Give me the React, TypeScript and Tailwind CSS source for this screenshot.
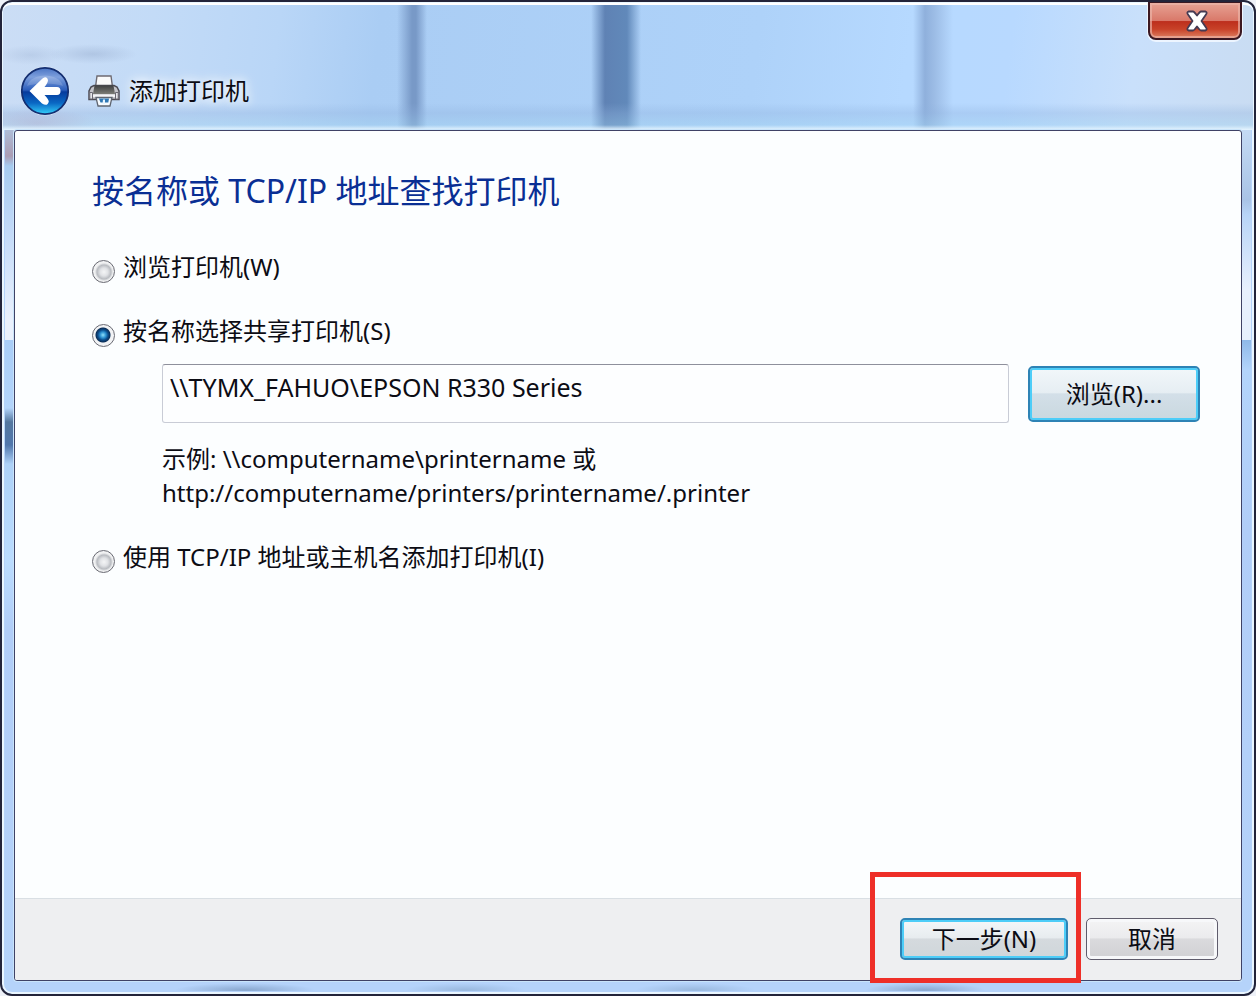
import { useState } from "react";
import type { ReactNode } from "react";

type Method = "browse" | "shared" | "tcpip";

function BackIcon() {
  return (
    <svg viewBox="0 0 50 50" className="size-[50px]" aria-hidden="true">
      <defs>
        <linearGradient id="orb" x1="0" y1="0" x2="0" y2="1">
          <stop offset="0" stopColor="#4a74c4" />
          <stop offset="0.2" stopColor="#7d9fdc" />
          <stop offset="0.48" stopColor="#2b5dbb" />
          <stop offset="0.52" stopColor="#063a9c" />
          <stop offset="0.76" stopColor="#0a68c4" />
          <stop offset="1" stopColor="#35d0fa" />
        </linearGradient>
      </defs>
      <circle cx="25" cy="25" r="24.5" fill="#f2f8ff" opacity="0.6" />
      <circle cx="25" cy="25" r="23.2" fill="url(#orb)" stroke="#142f72" strokeWidth="1.8" />
      <path d="M7 20C11 6 39 6 43 20C36 17 14 17 7 20Z" fill="#fff" opacity="0.16" />
      <path
        d="M9.500 25L22.500 12.500Q27 9.500 28 14Q28 17 24.500 21H37Q40.500 21 40.500 25Q40.500 29 37 29H24.500Q28.500 33 28.800 35.500Q27.500 41 22 37.500Z"
        fill="#fff"
      />
    </svg>
  );
}

function PrinterIcon() {
  return (
    <svg viewBox="0 0 32 32" className="size-8" aria-hidden="true">
      <defs>
        <linearGradient id="printerTop" x1="0" y1="0" x2="0" y2="1">
          <stop offset="0" stopColor="#3f4041" />
          <stop offset="1" stopColor="#7b7c76" />
        </linearGradient>
      </defs>
      <path d="M9 1H23L24.500 12H7.500Z" fill="#fafafa" stroke="#6d6a72" strokeWidth="1.400" />
      <path d="M3 12L6 10.500H26L29 12L31 16V24.500H1V16Z" fill="#c4c4c9" stroke="#4c4b54" strokeWidth="1.500" />
      <path d="M6.500 10.500H25.500L27 19H5Z" fill="url(#printerTop)" />
      <path d="M5 19.500H27V22H5Z" fill="#f4f4f6" />
      <path d="M1.800 17.500H4.500V24H1.800ZM27.500 17.500H30.200V24H27.500Z" fill="#e6e6ea" stroke="#6a6871" />
      <path d="M8 22.500H24L22 31H10Z" fill="#f6fbff" stroke="#5f6570" strokeWidth="1.300" />
      <path d="M11 23.500H21L20.300 27.500H12.500Z" fill="#2f78b5" />
      <path d="M15 24.500H17V29H14.500Z" fill="#e7f5ff" />
    </svg>
  );
}

function CloseIcon() {
  return (
    <svg viewBox="0 0 24 22" className="h-[22px] w-6" aria-hidden="true">
      <path
        d="M3.500 1.500H8Q9 1.500 12 5.500Q15 1.500 16 1.500H20.500Q22.500 2.500 21 4.500L16.500 11L21 17.500Q22.500 19.500 20.500 20.500H16Q15 20.500 12 16.500Q9 20.500 8 20.500H3.500Q1.500 19.500 3 17.500L7.500 11L3 4.500Q1.500 2.500 3.500 1.500Z"
        fill="#fff"
        stroke="#453a52"
        strokeWidth="1.800"
        strokeLinejoin="round"
      />
    </svg>
  );
}

function RadioOption({
  value,
  current,
  onSelect,
  children,
}: {
  value: Method;
  current: Method;
  onSelect: (value: Method) => void;
  children: ReactNode;
}) {
  return (
    <label className="flex w-fit items-start gap-2 text-2xl leading-8">
      <input
        type="radio"
        name="method"
        value={value}
        checked={current === value}
        onChange={() => onSelect(value)}
        className="mt-[9px] size-[23px] shrink-0 appearance-none rounded-full border border-[#696a73] bg-[radial-gradient(circle_at_12px_12px,#f4f5f6_0,#e0e2e5_4px,#b9bcc1_7px,#f0f1f2_9px)] bg-origin-border checked:bg-[radial-gradient(circle_at_11px_11px,#8fe0fa_0,#2b8fcf_3px,#0d4f8e_5px,#0b2f58_7px,#f2f3f5_8px)]"
      />
      <span>{children}</span>
    </label>
  );
}

export default function App() {
  const [method, setMethod] = useState<Method>("shared");
  const [printer, setPrinter] = useState("\\\\TYMX_FAHUO\\EPSON R330 Series");

  return (
    <div className="flex min-h-screen flex-col bg-[#eef1f8] font-['Noto_Sans','Noto_Sans_CJK_SC',sans-serif] text-[#0c0c14]">
      <main className="flex flex-1 flex-col overflow-hidden rounded-xl border-2 border-[#23243a] bg-[#b5d3fa] shadow-[inset_0_0_0_2px_#eaf6ff]">
        <header className="m-px mb-0 flex h-[127px] items-start rounded-t-lg border-t-2 border-white bg-[linear-gradient(180deg,transparent_98px,#8fb2de55_108px,#9fd0ee66_120px,#e6f5ff_125px),radial-gradient(ellipse_44px_10px_at_90px_49px,#8fa5c866,transparent),radial-gradient(ellipse_34px_10px_at_28px_50px,#8fa5c844,transparent),radial-gradient(ellipse_60px_14px_at_34px_118px,#c09bb877,transparent),linear-gradient(90deg,transparent_394px,#7899c7_409px,#7899c7_413px,transparent_424px,transparent_588px,#5f82b4_602px,#6189ba_624px,transparent_638px,transparent_910px,#8fb0dc_922px,#9dbde6_932px,transparent_950px),linear-gradient(97deg,#cbddf5_0,#c3dbf7_12%,#b9d6f7_22%,#aacdf4_30%,#aed2f9_60%,#b6d9ff_72%,#b8d9ff_80%,#c9e0fb_90%,#c9dcf2_100%)]">
          <div className="flex items-center pt-[61px] pl-[17px]">
            <button type="button" aria-label="后退" className="rounded-full">
              <BackIcon />
            </button>
            <div className="flex items-center gap-[9px] pl-[18px]">
              <PrinterIcon />
              <h1 className="text-2xl leading-8 [text-shadow:0_0_8px_white,0_0_14px_white]">添加打印机</h1>
            </div>
          </div>
          <button
            type="button"
            aria-label="关闭"
            className="-mt-1 mr-[11px] ml-auto flex h-[39px] w-[94px] items-center justify-center rounded-b-lg border-2 border-[#3b1822] bg-[linear-gradient(180deg,#e7a294_0,#d9796a_50%,#bd2f1d_53%,#c84229_75%,#dd8062_100%)] pl-1 shadow-[inset_0_0_0_2px_#ecb5a9aa,0_1px_0_1px_#edf5ff]"
          >
            <CloseIcon />
          </button>
        </header>

        <div className="flex flex-1">
          <div className="ml-[3px] w-[9px] bg-[linear-gradient(180deg,#aebdd8_0,#ab9db4_26px,#a6cbf0_36px,#c2d9f8_100px,#eaf1fd_190px,#eaf1fd_210px,#a9cdf7_210px,#b3d4fb_278px,#54779f_292px,#5177ac_315px,#add1f8_334px,#bbdcff_430px,#b1cdf8_500px,#b5d3fa_100%)]" />
          <section className="flex flex-1 flex-col rounded-[3px] border border-[#3f4266] bg-[#fcfeff] shadow-[0_0_0_1px_#c9e4fa]">
            <form id="printer-form" className="flex flex-1 flex-col pt-9 pr-[41px] pl-[77px]" onSubmit={(e) => e.preventDefault()}>
              <h2 className="text-[32px] leading-12 text-[#0a2f94]">按名称或 TCP/IP 地址查找打印机</h2>

              <div className="mt-9">
                <RadioOption value="browse" current={method} onSelect={setMethod}>
                  浏览打印机(W)
                </RadioOption>
              </div>

              <div className="mt-8">
                <RadioOption value="shared" current={method} onSelect={setMethod}>
                  按名称选择共享打印机(S)
                </RadioOption>
                <div className="mt-[17px] flex items-center gap-[19px] pl-[70px]">
                  <input
                    type="text"
                    aria-label="打印机名称"
                    value={printer}
                    onChange={(e) => setPrinter(e.target.value)}
                    className="h-[59px] min-w-0 flex-1 rounded-[3px] border border-[#c9ccd6] border-t-[#8e909c] bg-[#fdfeff] px-[7px] pb-3.5 text-[25px] outline-none"
                  />
                  <button
                    type="button"
                    className="h-14 w-[172px] rounded-[5px] border-2 border-[#2e83b5] bg-[linear-gradient(180deg,#f2f7fa_0,#e6eef3_47%,#d3dfe8_50%,#c9d8df_100%)] text-2xl shadow-[inset_0_0_0_2px_#4dcdf8]"
                  >
                    浏览(R)...
                  </button>
                </div>
                <p className="mt-[19px] pl-[70px] text-2xl leading-[34px]">
                  示例: \\computername\printername 或
                  <br />
                  http://computername/printers/printername/.printer
                </p>
              </div>

              <div className="mt-[31px]">
                <RadioOption value="tcpip" current={method} onSelect={setMethod}>
                  使用 TCP/IP 地址或主机名添加打印机(I)
                </RadioOption>
              </div>
            </form>

            <footer className="flex justify-end gap-[18px] rounded-b-[2px] border-t border-[#d9dfe4] bg-[#eeeff1] pt-[19px] pb-5 pr-[23px]">
              <div className="relative">
                <button
                  type="submit"
                  form="printer-form"
                  className="block h-[42px] w-[168px] rounded-[5px] border-2 border-[#2e83b5] bg-[linear-gradient(180deg,#f4f7f9_0,#e7ecef_47%,#d5dade_50%,#cfd6da_100%)] text-2xl leading-8 shadow-[inset_0_0_0_2px_#4dcdf8]"
                >
                  下一步(N)
                </button>
                <div className="pointer-events-none absolute -top-[46px] -right-[13px] -bottom-[23px] -left-[30px] border-[5px] border-[#ee2f28]" />
              </div>
              <button
                type="button"
                className="h-[42px] w-[132px] rounded-[5px] border border-[#5f5c6c] bg-[linear-gradient(180deg,#f4f4f5_0,#ebebed_47%,#dadadd_50%,#d0d0d3_100%)] text-2xl leading-8 shadow-[inset_0_0_0_3px_#f7f8fa]"
              >
                取消
              </button>
            </footer>
          </section>
          <div className="mr-[3px] w-[9px] bg-[linear-gradient(180deg,#c4daf4_0,#a9c3e6_70px,#b8d4f7_85px,#e8f0fd_160px,#e6f0fd_210px,#8fb9e8_210px,#b3d4fb_240px,#b1cdf8_400px,#b5d3fa_100%)]" />
        </div>
        <div className="mx-[3px] mt-px mb-[3px] h-[9px] bg-[radial-gradient(ellipse_70px_7px_at_240px_8px,#8aa8cf,transparent),radial-gradient(ellipse_60px_7px_at_460px_8px,#9ab9de,transparent),radial-gradient(ellipse_60px_7px_at_690px_8px,#9ab9de,transparent),radial-gradient(ellipse_60px_7px_at_920px_8px,#8aa8cf,transparent)]" />
      </main>
    </div>
  );
}
